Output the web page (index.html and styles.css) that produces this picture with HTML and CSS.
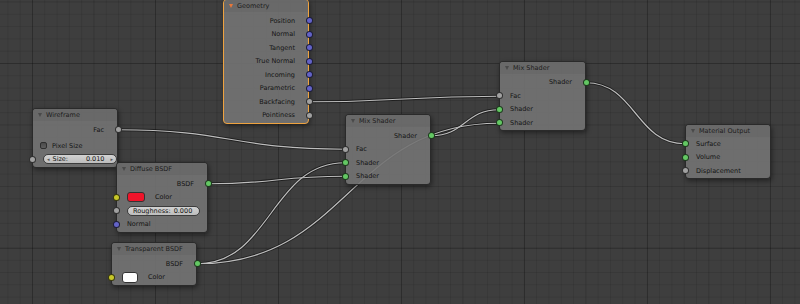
FILE: index.html
```html
<!DOCTYPE html>
<html>
<head>
<meta charset="utf-8">
<link rel="stylesheet" href="styles.css">
</head>
<body>
<div class="canvas">
  <svg class="links" width="800" height="304" viewBox="0 0 800 304">
    <defs>
      <path id="l1" d="M309 101.75 C404 101.75 404 96.25 499 96.25"/>
      <path id="l2" d="M118 129.75 C231.5 129.75 231.5 149.25 345 149.25"/>
      <path id="l3" d="M208 183.75 C276.5 183.75 276.5 176.25 345 176.25"/>
      <path id="l4" d="M197 263.75 C271 263.75 271 162.75 345 162.75"/>
      <path id="l5" d="M197 263.75 C348 263.75 348 123.25 499 123.25"/>
      <path id="l6" d="M431 135.75 C465 135.75 465 109.75 499 109.75"/>
      <path id="l7" d="M586 82.75 C635.5 82.75 635.5 143.75 685 143.75"/>
    </defs>
    <g class="wire-dark">
      <use href="#l1"/><use href="#l2"/><use href="#l3"/><use href="#l4"/><use href="#l5"/><use href="#l6"/><use href="#l7"/>
    </g>
    <g class="wire-light">
      <use href="#l1"/><use href="#l2"/><use href="#l3"/><use href="#l4"/><use href="#l5"/><use href="#l6"/><use href="#l7"/>
    </g>
  </svg>

  <div class="node n-geo active">
    <div class="hdr"><span class="tri"></span><span class="title">Geometry</span></div>
    <div class="body">
      <div class="row out"><span>Position</span><i class="sock vec"></i></div>
      <div class="row out"><span>Normal</span><i class="sock vec"></i></div>
      <div class="row out"><span>Tangent</span><i class="sock vec"></i></div>
      <div class="row out"><span>True Normal</span><i class="sock vec"></i></div>
      <div class="row out"><span>Incoming</span><i class="sock vec"></i></div>
      <div class="row out"><span>Parametric</span><i class="sock vec"></i></div>
      <div class="row out"><span>Backfacing</span><i class="sock flt"></i></div>
      <div class="row out"><span>Pointiness</span><i class="sock flt"></i></div>
    </div>
  </div>

  <div class="node n-wire">
    <div class="hdr"><span class="tri"></span><span class="title">Wireframe</span></div>
    <div class="body">
      <div class="row out"><span>Fac</span><i class="sock flt"></i></div>
      <div class="row check-row"><span class="check"></span><span>Pixel Size</span></div>
      <div class="row in field-row"><i class="sock flt"></i>
        <div class="field size-field"><span class="arr">&#9666;</span><span class="flabel">Size:</span><span class="fval">0.010</span><span class="arr">&#9656;</span></div>
      </div>
    </div>
  </div>

  <div class="node n-diff">
    <div class="hdr"><span class="tri"></span><span class="title">Diffuse BSDF</span></div>
    <div class="body">
      <div class="row out"><span>BSDF</span><i class="sock shd"></i></div>
      <div class="row in swatch-row"><i class="sock col"></i><span class="swatch red"></span><span>Color</span></div>
      <div class="row in field-row rough-row"><i class="sock flt"></i>
        <div class="field rough-field"><span class="flabel">Roughness:</span><span class="fval">0.000</span></div>
      </div>
      <div class="row in"><i class="sock vec"></i><span>Normal</span></div>
    </div>
  </div>

  <div class="node n-trans">
    <div class="hdr"><span class="tri"></span><span class="title">Transparent BSDF</span></div>
    <div class="body">
      <div class="row out"><span>BSDF</span><i class="sock shd"></i></div>
      <div class="row in swatch-row trans-sw"><i class="sock col"></i><span class="swatch white"></span><span>Color</span></div>
    </div>
  </div>

  <div class="node n-mix1">
    <div class="hdr"><span class="tri"></span><span class="title">Mix Shader</span></div>
    <div class="body">
      <div class="row out"><span>Shader</span><i class="sock shd"></i></div>
      <div class="row in"><i class="sock flt"></i><span>Fac</span></div>
      <div class="row in"><i class="sock shd"></i><span>Shader</span></div>
      <div class="row in"><i class="sock shd"></i><span>Shader</span></div>
    </div>
  </div>

  <div class="node n-mix2">
    <div class="hdr"><span class="tri"></span><span class="title">Mix Shader</span></div>
    <div class="body">
      <div class="row out"><span>Shader</span><i class="sock shd"></i></div>
      <div class="row in"><i class="sock flt"></i><span>Fac</span></div>
      <div class="row in"><i class="sock shd"></i><span>Shader</span></div>
      <div class="row in"><i class="sock shd"></i><span>Shader</span></div>
    </div>
  </div>

  <div class="node n-out">
    <div class="hdr"><span class="tri"></span><span class="title">Material Output</span></div>
    <div class="body">
      <div class="row in"><i class="sock shd"></i><span>Surface</span></div>
      <div class="row in"><i class="sock shd"></i><span>Volume</span></div>
      <div class="row in"><i class="sock flt"></i><span>Displacement</span></div>
    </div>
  </div>
</div>
</body>
</html>
```

FILE: styles.css
```css
html, body {
  margin: 0;
  padding: 0;
  background: #3d3d3d;
}

.canvas {
  position: relative;
  width: 800px;
  height: 304px;
  overflow: hidden;
  font-family: "DejaVu Sans", "Liberation Sans", sans-serif;
  font-size: 6.5px;
  color: #141414;
  background-color: #3e3e3e;
  background-image:
    linear-gradient(to right, rgba(0,0,0,0.16) 1px, transparent 1px),
    linear-gradient(to bottom, rgba(0,0,0,0.16) 1px, transparent 1px),
    linear-gradient(to right, rgba(0,0,0,0.06) 1px, transparent 1px),
    linear-gradient(to bottom, rgba(0,0,0,0.06) 1px, transparent 1px),
    linear-gradient(to right, rgba(0,0,0,0.09) 1px, transparent 1px),
    linear-gradient(to bottom, rgba(0,0,0,0.09) 1px, transparent 1px);
  background-size:
    123px 100%, 100% 185px,
    61.5px 100%, 100% 61.5px,
    12.3px 100%, 100% 12.3px;
  background-position:
    32px 0, 0 63px,
    32px 0, 0 1.5px,
    7.4px 0, 0 1.5px;
}

.links {
  position: absolute;
  left: 0;
  top: 0;
}

.wire-dark use {
  fill: none;
  stroke: rgba(20,20,20,0.7);
  stroke-width: 2.8;
}

.wire-light use {
  fill: none;
  stroke: #bdbdbd;
  stroke-width: 1.2;
}

.node {
  position: absolute;
  box-sizing: border-box;
  border: 1px solid rgba(25,25,25,0.8);
  border-radius: 4px;
  background: rgba(115,115,115,0.9);
  box-shadow: 1px 2px 5px rgba(0,0,0,0.45);
}

.node.active {
  border-color: #eea23f;
}

.hdr {
  height: 12px;
  display: flex;
  align-items: center;
  padding-left: 5px;
  background: rgba(104,104,104,0.95);
  border-radius: 3px 3px 0 0;
  color: #1c1c1c;
}

.tri {
  width: 0;
  height: 0;
  border-left: 2.5px solid transparent;
  border-right: 2.5px solid transparent;
  border-top: 4px solid #4a4a4a;
  margin-right: 4px;
}

.active .tri {
  border-top-color: #e8773a;
}

.body {
  padding: 2px 0 0.5px 0;
}

.row {
  position: relative;
  height: 13.5px;
  display: flex;
  align-items: center;
  white-space: nowrap;
}

.row.out {
  justify-content: flex-end;
  padding-right: 13px;
}

.row.in {
  padding-left: 10px;
}

.sock {
  position: absolute;
  top: 50%;
  width: 7px;
  height: 7px;
  margin-top: -3.5px;
  box-sizing: border-box;
  border-radius: 50%;
  border: 1px solid rgba(0,0,0,0.7);
}

.out .sock { right: -4.5px; }
.in .sock { left: -4.5px; }

.sock.vec { background: #6363c7; }
.sock.flt { background: #a1a1a1; }
.sock.shd { background: #63c763; }
.sock.col { background: #c7c729; }

/* node placement on the canvas */
.n-geo { left: 223px; top: -1px; width: 86px; }
.n-wire { left: 32px; top: 108px; width: 86px; }
.n-diff { left: 116px; top: 162px; width: 92px; }
.n-trans { left: 111px; top: 242px; width: 86px; }
.n-mix1 { left: 345px; top: 114px; width: 86px; }
.n-mix2 { left: 499px; top: 60.5px; width: 87px; }
.n-out { left: 685px; top: 124px; width: 86px; }
.n-out .body { padding-top: 0; }

/* wireframe widgets */
.check-row {
  margin-top: 2.5px;
  padding-left: 7px;
}

.check {
  width: 7px;
  height: 7px;
  box-sizing: border-box;
  border: 1px solid #2e2e2e;
  border-radius: 2px;
  background: linear-gradient(#4a4a4a, #5e5e5e);
  margin-right: 5px;
}

.field-row {
  padding-left: 5px;
}

.field {
  box-sizing: border-box;
  height: 10px;
  border: 1px solid #3c3c3c;
  border-radius: 5px;
  background: linear-gradient(#d2d2d2, #bdbdbd);
  display: flex;
  align-items: center;
  color: #111;
}

.size-field {
  width: 74px;
  padding: 0 3px;
}

.size-field .arr {
  font-size: 5px;
  color: #555;
}

.size-field .flabel {
  margin-left: 3px;
}

.size-field .fval {
  margin-left: auto;
  margin-right: 6px;
}

.rough-row {
  padding-left: 11px;
}

.rough-field {
  width: 73px;
  padding-left: 5px;
}

.rough-field .fval {
  margin-left: 3px;
}

.swatch-row {
  padding-left: 6px;
}

.swatch {
  box-sizing: border-box;
  width: 18px;
  height: 10px;
  border: 1px solid #333;
  border-radius: 3px;
  margin-right: 10px;
}

.swatch.red { background: #f0142a; }
.swatch.white { background: #ffffff; }

.trans-sw {
  padding-left: 8px;
}

.trans-sw .swatch {
  width: 16px;
  height: 11px;
}
```
